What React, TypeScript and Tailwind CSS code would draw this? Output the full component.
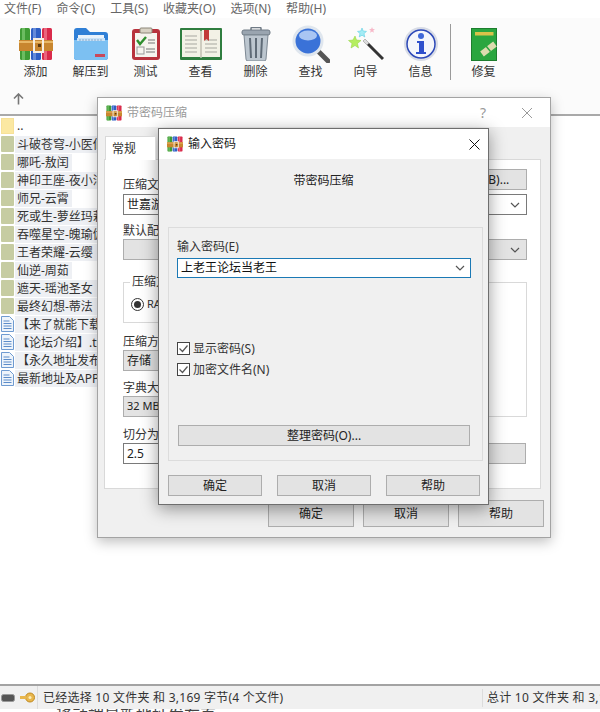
import type { ReactNode } from 'react';

const menus = ['文件(F)', '命令(C)', '工具(S)', '收藏夹(O)', '选项(N)', '帮助(H)'];

const folders = [
  { name: '斗破苍穹-小医仙', w: 'w-[200px]' },
  { name: '哪吒-敖闰', w: 'w-[57px]' },
  { name: '神印王座-夜小洁', w: 'w-[200px]' },
  { name: '师兄-云霄', w: 'w-[57px]' },
  { name: '死或生-萝丝玛莉', w: 'w-[200px]' },
  { name: '吞噬星空-魄瑜伽', w: 'w-[200px]' },
  { name: '王者荣耀-云缨', w: 'w-[85px]' },
  { name: '仙逆-周茹', w: 'w-[57px]' },
  { name: '遮天-瑶池圣女', w: 'w-[200px]' },
  { name: '最终幻想-蒂法', w: 'w-[85px]' },
];

const files = ['【来了就能下载', '【论坛介绍】.txt', '【永久地址发布', '最新地址及APP'];

function RarIcon({ size = 34 }: { size?: number }) {
  return (
    <svg width={size} height={size} viewBox="0 0 34 34">
      <rect x="1" y="1" width="10" height="32" rx="1.5" fill="#3f9c35" />
      <rect x="12" y="1" width="10" height="32" rx="1.5" fill="#2f5fc4" />
      <rect x="23" y="1" width="10" height="32" rx="1.5" fill="#d92b4b" />
      <rect x="3" y="1" width="3" height="32" fill="#8ad27f" opacity="0.6" />
      <rect x="14" y="1" width="3" height="32" fill="#8aa8ea" opacity="0.6" />
      <rect x="25" y="1" width="3" height="32" fill="#f58a9e" opacity="0.6" />
      <rect x="0" y="13" width="34" height="11" fill="#c8862f" />
      <rect x="0" y="14" width="34" height="2" fill="#e8b765" />
      <rect x="15" y="12" width="9" height="13" fill="none" stroke="#f7eee0" strokeWidth="2" />
      <rect x="19" y="17" width="3" height="3" fill="#5a3a10" />
    </svg>
  );
}

function FolderIcon() {
  return (
    <svg width="36" height="34" viewBox="0 0 36 34">
      <path d="M1 4a3 3 0 0 1 3-3h9l4 4h15a3 3 0 0 1 3 3v22a3 3 0 0 1-3 3H4a3 3 0 0 1-3-3z" fill="#2f7fd6" />
      <rect x="5" y="8" width="26" height="8" fill="#e9f2fb" />
      <path d="M1 13h34v17a3 3 0 0 1-3 3H4a3 3 0 0 1-3-3z" fill="#7cc0f2" />
      <path d="M4 11h28v3H4z" fill="#c8e2f8" />
      <path d="M6 13h24" stroke="#8aa9c9" strokeWidth="1" strokeDasharray="2 1" />
      <rect x="22" y="27" width="10" height="3" fill="#c9485a" />
    </svg>
  );
}

function ClipboardIcon() {
  return (
    <svg width="30" height="34" viewBox="0 0 30 34">
      <rect x="1" y="2" width="28" height="31" rx="3" fill="#b8323c" />
      <rect x="4" y="6" width="22" height="24" fill="#f6f4ee" />
      <rect x="9" y="1" width="12" height="5" rx="1" fill="#d8d2c4" stroke="#8c8678" />
      <path d="M6 13l3 4 6-7" fill="none" stroke="#2f8f2f" strokeWidth="2.4" />
      <path d="M17 13h7M17 16h7" stroke="#777" strokeWidth="1" />
      <rect x="6" y="20" width="7" height="7" fill="none" stroke="#999" />
      <path d="M15 22h9M15 25h9" stroke="#777" strokeWidth="1" />
    </svg>
  );
}

function BookIcon() {
  return (
    <svg width="42" height="34" viewBox="0 0 42 34">
      <rect x="0" y="1" width="42" height="32" rx="1" fill="#2f7d3f" />
      <path d="M2 3h18l1 2 1-2h18v27H22l-1 1-1-1H2z" fill="#f3f1e6" />
      <path d="M21 5v25" stroke="#a9a698" />
      <path d="M5 9h12M5 13h12M5 17h12M5 21h12M5 25h12M25 13h12M25 17h12M25 21h12M25 25h12" stroke="#a7a79f" strokeWidth="1.2" />
      <path d="M24 3h5v11l-2.500-2-2.500 2z" fill="#c23a3a" />
    </svg>
  );
}

function TrashIcon() {
  return (
    <svg width="30" height="34" viewBox="0 0 30 34">
      <rect x="10" y="0.500" width="10" height="4" rx="1" fill="none" stroke="#6f7a85" strokeWidth="1.500" />
      <rect x="1" y="3" width="28" height="5" rx="2" fill="#9aa5b0" stroke="#6f7a85" />
      <path d="M3 8h24l-2 24a2 2 0 0 1-2 2H7a2 2 0 0 1-2-2z" fill="#bcc6cf" stroke="#7d8893" />
      <path d="M9 11l1 20M15 11v20M21 11l-1 20" stroke="#5f6b77" strokeWidth="2" />
    </svg>
  );
}

function SearchIcon() {
  return (
    <svg width="38" height="38" viewBox="0 0 38 38" className="shrink-0">
      <path d="M25 25l11 11" stroke="#555" strokeWidth="5" strokeLinecap="round" />
      <circle cx="16" cy="16" r="15.500" fill="#dfe6ee" />
      <circle cx="16" cy="16" r="12.500" fill="#3a72d8" />
      <ellipse cx="16" cy="10.500" rx="9" ry="5" fill="#a9c5f3" />
    </svg>
  );
}

function WandIcon() {
  return (
    <svg width="36" height="34" viewBox="0 0 36 34">
      <path d="M16 13l19 19" stroke="#333" strokeWidth="3" />
      <path d="M16 13l4 4" stroke="#ddd" strokeWidth="3" />
      <g transform="translate(0 -3)">
        <path d="M7 12l1.500 4 4.500.500-3.500 3 1 4.500L7 21.500 3 24l1-4.500-3.500-3 4.500-.500z" fill="#b5ee5f" stroke="#8ed03a" strokeWidth="0.500" />
      </g>
      <g transform="translate(-5 0)">
        <path d="M19 1l1.200 3 3.300.400-2.500 2.200.800 3.400-2.800-1.800-2.800 1.800.800-3.400-2.500-2.200 3.300-.400z" fill="#a4ecf5" stroke="#48c8de" strokeWidth="0.500" />
        <path d="M29 0l.800 2 2.200.200-1.700 1.400.600 2.200-1.900-1.200-1.900 1.200.600-2.200L26 2.200l2.200-.200z" fill="#f7b8c8" />
      </g>
    </svg>
  );
}

function InfoIcon() {
  return (
    <svg width="36" height="36" viewBox="0 0 36 36">
      <circle cx="18" cy="18" r="17" fill="#d8dce6" />
      <circle cx="18" cy="18" r="14" fill="#f4f6fb" stroke="#2c48b8" strokeWidth="1.500" />
      <circle cx="18" cy="10" r="3" fill="#3f68d8" />
      <path d="M14 15h7v11h2v2H13v-2h3v-9h-2z" fill="#2f50cc" />
    </svg>
  );
}

function RepairIcon() {
  return (
    <svg width="26" height="33" viewBox="0 0 26 33">
      <rect x="0.500" y="0.500" width="25" height="32" fill="#2aa63f" stroke="#1d7e2e" />
      <rect x="4" y="4" width="18.500" height="3.500" fill="#d9c24a" />
      <path d="M11 26l13-10" stroke="#dcdcae" strokeWidth="6" />
      <path d="M15 18l4.500 5.500" stroke="#2aa63f" strokeWidth="1.500" />
    </svg>
  );
}

const tools: { label: string; icon: ReactNode }[] = [
  { label: '添加', icon: <RarIcon /> },
  { label: '解压到', icon: <FolderIcon /> },
  { label: '测试', icon: <ClipboardIcon /> },
  { label: '查看', icon: <BookIcon /> },
  { label: '删除', icon: <TrashIcon /> },
  { label: '查找', icon: <SearchIcon /> },
  { label: '向导', icon: <WandIcon /> },
  { label: '信息', icon: <InfoIcon /> },
];

function ToolButton({ label, icon }: { label: string; icon: ReactNode }) {
  return (
    <div className="flex w-[55px] flex-col items-center">
      <div className="flex h-[36px] items-center justify-center">{icon}</div>
      <span className="mt-[2px] text-[12px] leading-[16px] text-[#333]">{label}</span>
    </div>
  );
}

function Chevron() {
  return (
    <svg width="10" height="6" viewBox="0 0 10 6" className="shrink-0">
      <path d="M1 1l4 4 4-4" fill="none" stroke="#555" strokeWidth="1.200" />
    </svg>
  );
}

function Btn({ children, className }: { children?: ReactNode; className: string }) {
  return (
    <div className={`flex items-center justify-center border border-[#adadad] bg-[#e3e3e3] text-[12px] text-[#222] ${className}`}>
      {children}
    </div>
  );
}

function Check({ label }: { label: string }) {
  return (
    <div className="flex h-[21px] items-center gap-[3px]">
      <svg width="13" height="13" viewBox="0 0 13 13">
        <rect x="0.500" y="0.500" width="12" height="12" fill="#fff" stroke="#444" />
        <path d="M2.500 6.500l3 3 5-6" fill="none" stroke="#555" strokeWidth="1.200" />
      </svg>
      <span className="text-[12px] text-[#333]">{label}</span>
    </div>
  );
}

function SmallLabel({ children, className }: { children: ReactNode; className?: string }) {
  return <div className={`h-[16px] whitespace-nowrap text-[12px] leading-[16px] text-[#333] ${className ?? ''}`}>{children}</div>;
}

function BackDialog() {
  return (
    <div className="absolute left-[97px] top-[97px] flex h-[441px] w-[454px] flex-col border border-[#a3a3a3] bg-[#f0f0f0] shadow-[0_4px_12px_rgba(0,0,0,0.25)]">
      <div className="flex h-[29px] shrink-0 items-center bg-white pl-[8px] pr-[17px]">
        <RarIcon size={16} />
        <span className="ml-[5px] text-[12px] text-[#9a9a9a]">带密码压缩</span>
        <span className="ml-auto text-[14px] text-[#9a9a9a]">?</span>
        <svg width="12" height="12" viewBox="0 0 12 12" className="ml-[35px]">
          <path d="M1 1l10 10M11 1L1 11" stroke="#9a9a9a" strokeWidth="1" />
        </svg>
      </div>
      <div className="pl-[7px] pt-[9px]">
        <div className="relative z-10 -mb-px flex h-[24px] w-[51px] items-center border border-b-0 border-[#d9d9d9] bg-white pl-[6px] text-[12px] text-[#333]">
          常规
        </div>
      </div>
      <div className="ml-[6px] mr-[9px] flex h-[330px] flex-col border border-[#d9d9d9] bg-white pl-[18px] pr-[13px]">
        <div className="mt-[9px] flex h-[22px] items-end justify-between">
          <SmallLabel className="mb-[-2px]">压缩文件名(A)</SmallLabel>
          <Btn className="mb-0 h-[21px] w-[84px] self-start">浏览(B)...</Btn>
        </div>
        <div className="mt-[3px] flex h-[21px] items-center justify-between border border-[#7a7a7a] pl-[3px] pr-[6px] text-[12px] text-[#222]">
          世嘉游戏合集.rar
          <Chevron />
        </div>
        <SmallLabel className="mt-[8px]">默认配置</SmallLabel>
        <div className="flex h-[21px] gap-[10px]">
          <Btn className="w-[190px]" />
          <div className="flex flex-1 items-center justify-end border border-[#adadad] bg-[#e3e3e3] pr-[6px]">
            <Chevron />
          </div>
        </div>
        <div className="mt-[22px] flex gap-[10px]">
          <div className="w-[190px]">
            <div className="relative h-[41px] border border-[#d9d9d9]">
              <span className="absolute -top-[9px] left-[6px] bg-white px-[2px] text-[12px] leading-[16px] text-[#333]">压缩文件格式</span>
              <div className="flex h-full items-center gap-[3px] pl-[7px] pt-[3px]">
                <svg width="13" height="13" viewBox="0 0 13 13">
                  <circle cx="6.500" cy="6.500" r="6" fill="#fff" stroke="#333" />
                  <circle cx="6.500" cy="6.500" r="3.500" fill="#333" />
                </svg>
                <span className="text-[11px] text-[#333]">RAR</span>
              </div>
            </div>
            <SmallLabel className="mt-[11px]">压缩方式(M)</SmallLabel>
            <div className="flex h-[21px] items-center border border-[#adadad] bg-[#e3e3e3] pl-[3px] text-[12px] text-[#222]">存储</div>
            <SmallLabel className="mt-[9px]">字典大小(I)</SmallLabel>
            <div className="flex h-[21px] items-center border border-[#adadad] bg-[#e3e3e3] pl-[3px] text-[11px] text-[#222]">32 MB</div>
            <SmallLabel className="mt-[10px]">切分为分卷(V)</SmallLabel>
            <div className="flex h-[21px] items-center border border-[#7a7a7a] pl-[3px] text-[12px] text-[#222]">2.5</div>
          </div>
          <div className="flex flex-1 flex-col">
            <div className="h-[135px] border border-[#d9d9d9]" />
            <Btn className="ml-0 mr-px mt-[26px] h-[21px]" />
          </div>
        </div>
      </div>
      <div className="mr-[6px] mt-[11px] flex justify-end gap-[9px]">
        <Btn className="h-[27px] w-[86px]">确定</Btn>
        <Btn className="h-[27px] w-[86px]">取消</Btn>
        <Btn className="h-[27px] w-[86px]">帮助</Btn>
      </div>
    </div>
  );
}

function FrontDialog() {
  return (
    <div className="absolute left-[158px] top-[128px] flex h-[377px] w-[331px] flex-col border border-[#6e6e6e] bg-[#f0f0f0] shadow-[0_4px_16px_rgba(0,0,0,0.4)]">
      <div className="flex h-[30px] shrink-0 items-center bg-white pl-[8px] pr-[8px]">
        <RarIcon size={16} />
        <span className="ml-[5px] text-[12px] text-[#222]">输入密码</span>
        <svg width="11" height="11" viewBox="0 0 11 11" className="ml-auto">
          <path d="M0.500 0.500l10 10M10.500 0.500l-10 10" stroke="#111" strokeWidth="1" />
        </svg>
      </div>
      <div className="mt-[14px] text-center text-[12px] leading-[16px] text-[#222]">带密码压缩</div>
      <div className="ml-[9px] mt-[38px] flex h-[234px] w-[315px] flex-col border border-[#dcdcdc] px-[8px]">
        <SmallLabel className="mt-[11px]">输入密码(E)</SmallLabel>
        <div className="mt-[3px] flex h-[20px] w-[294px] items-center justify-between border border-[#1b79b5] bg-white pl-[3px] pr-[5px] text-[12px] text-[#111]">
          上老王论坛当老王
          <Chevron />
        </div>
        <div className="mt-[60px]">
          <Check label="显示密码(S)" />
          <Check label="加密文件名(N)" />
        </div>
        <Btn className="ml-px mt-[45px] h-[21px] w-[292px]">整理密码(O)...</Btn>
      </div>
      <div className="ml-[9px] mt-[14px] flex gap-[15px]">
        <Btn className="h-[21px] w-[94px]">确定</Btn>
        <Btn className="h-[21px] w-[94px]">取消</Btn>
        <Btn className="h-[21px] w-[94px]">帮助</Btn>
      </div>
    </div>
  );
}

export default function App() {
  return (
    <div className="relative flex h-[712px] w-[600px] flex-col overflow-hidden bg-white font-['Noto_Sans','Noto_Sans_CJK_SC',sans-serif]">
      <div className="flex h-[18px] shrink-0 items-center gap-[15px] pl-[4px] text-[12px] text-[#666]">
        {menus.map((m) => (
          <span key={m}>{m}</span>
        ))}
      </div>

      <div className="flex h-[98px] shrink-0 flex-col border-b-2 border-[#a9a9a9] bg-[#fbfbfb]">
        <div className="flex h-[68px] items-start pl-[8px] pt-[8px]">
          {tools.map((t) => (
            <ToolButton key={t.label} label={t.label} icon={t.icon} />
          ))}
          <div className="ml-[2px] mt-[-2px] h-[56px] w-px bg-[#9a9a9a]" />
          <div className="ml-[5px]">
            <ToolButton label="修复" icon={<RepairIcon />} />
          </div>
        </div>
        <div className="flex flex-1 items-center pb-[2px] pl-[13px]">
          <svg width="11" height="12" viewBox="0 0 11 12">
            <path d="M5.500 11.500V1.500M1 5.500l4.500-4.500 4.500 4.500" fill="none" stroke="#777" strokeWidth="1.600" />
          </svg>
        </div>
      </div>

      <div className="flex-1 overflow-hidden pl-[1px] pt-[1px]">
        <div className="flex h-[18px] items-center gap-[3px]">
          <svg width="13" height="16" viewBox="0 0 13 16">
            <rect width="13" height="16" rx="1" fill="#fbe8a2" stroke="#e9cf7a" strokeWidth="0.500" />
          </svg>
          <span className="text-[12px] text-[#333]">..</span>
        </div>
        {folders.map((f) => (
          <div key={f.name} className="flex h-[18px] items-center">
            <svg width="13" height="16" viewBox="0 0 13 16" className="shrink-0">
              <rect width="13" height="16" rx="1" fill="#c6cca2" />
            </svg>
            <span className={`ml-px h-[17px] shrink-0 whitespace-nowrap bg-[#eef0f4] pl-[2px] text-[12px] leading-[17px] text-[#333] ${f.w}`}>
              {f.name}
            </span>
          </div>
        ))}
        {files.map((f) => (
          <div key={f} className="flex h-[18px] items-center">
            <svg width="13" height="16" viewBox="0 0 13 16" className="shrink-0">
              <path d="M0.500 0.500h8l4 4v11h-12z" fill="#eef4fb" stroke="#6f9bd1" />
              <path d="M2.500 5h6M2.500 7.500h8M2.500 10h8M2.500 12.500h8" stroke="#5c8cc9" />
            </svg>
            <span className="ml-px h-[17px] w-[200px] shrink-0 whitespace-nowrap bg-[#eef0f4] pl-[2px] text-[12px] leading-[17px] text-[#333]">
              {f}
            </span>
          </div>
        ))}
      </div>

      <div className="flex h-[25px] shrink-0 items-center border-t-2 border-[#a3a3a3] bg-[#f0f0f0] text-[12px] tracking-[0.25px] text-[#333]">
        <div className="flex h-full w-[38px] shrink-0 items-center gap-[5px] border-r border-[#dcdcdc] pl-[1px]">
          <svg width="14" height="8" viewBox="0 0 14 8">
            <rect x="0.500" y="0.500" width="13" height="7" rx="2" fill="#555" stroke="#999" />
          </svg>
          <svg width="15" height="11" viewBox="0 0 15 11">
            <circle cx="10" cy="5.500" r="4.500" fill="#e8b64c" stroke="#c08a20" />
            <circle cx="10" cy="5.500" r="1.500" fill="#fbeeb8" />
            <path d="M0 4h6v3H0z" fill="#e8b64c" />
          </svg>
        </div>
        <span className="w-[445px] shrink-0 whitespace-nowrap border-r border-[#dcdcdc] pl-[5px]">已经选择 10 文件夹 和 3,169 字节(4 个文件)</span>
        <span className="whitespace-nowrap pl-[4px]">总计 10 文件夹 和 3,169 字节(4 个文件)</span>
      </div>
      <div className="h-[3px] shrink-0 overflow-hidden bg-white pl-[56px] text-[16px] leading-[12px] text-[#444]">
        移动端最新地址发布页
      </div>

      <BackDialog />
      <FrontDialog />
    </div>
  );
}
